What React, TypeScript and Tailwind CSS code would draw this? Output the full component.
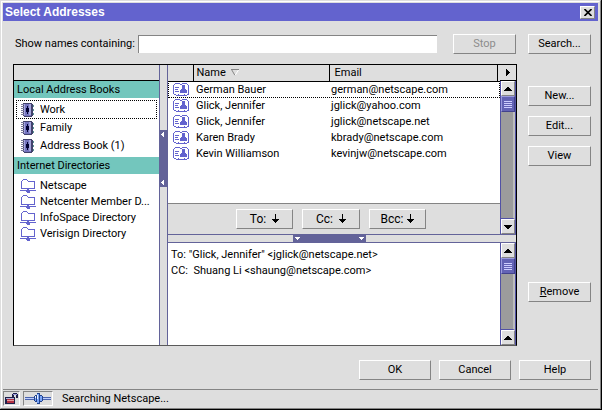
import type { ReactNode } from "react";

const contacts = [
  { name: "German Bauer", email: "german@netscape.com" },
  { name: "Glick, Jennifer", email: "jglick@yahoo.com" },
  { name: "Glick, Jennifer", email: "jglick@netscape.net" },
  { name: "Karen Brady", email: "kbrady@netscape.com" },
  { name: "Kevin Williamson", email: "kevinjw@netscape.com" },
];

const directories = ["Netscape", "Netcenter Member D...", "InfoSpace Directory", "Verisign Directory"];

function Button({ children, className = "", disabled = false }: { children: ReactNode; className?: string; disabled?: boolean }) {
  return (
    <button
      type="button"
      disabled={disabled}
      className={`flex h-5 shrink-0 items-center justify-center border border-t-white border-l-white border-r-[#848484] border-b-[#848484] bg-[#dedede] disabled:text-[#8c8c8c] ${className}`}
    >
      {children}
    </button>
  );
}

function CardIcon() {
  return (
    <svg width="16" height="13" viewBox="0 0 16 13" shapeRendering="crispEdges" className="block shrink-0">
      <path d="M2 0h5v1h-5zM1 1h1v1h-1zM0 2h1v9h-1zM1 11h2v1h-2zM3 12h2v-1h1v1h5v-1h1v1h2v1h-11zM7 1h2v1h-2zM9 0h5v1h-5zM14 1h1v1h-1zM15 2h1v10h-1zM14 11h1v1h-1z" fill="#6363ce" />
      <path d="M2 4h4v1h-4zM2 6h3v1h-3zM2 8h4v1h-4zM9 2h3v4h-3zM8 6h5v1h-5zM7 7h7v3h-7z" fill="#6363ce" />
    </svg>
  );
}

function BookIcon() {
  return (
    <svg width="13" height="14" viewBox="0 0 13 14" shapeRendering="crispEdges" className="block shrink-0">
      <path d="M2 0h9v1h1v12h-1v1h-8v-1h-1z" fill="#42426b" />
      <path d="M3 1h7v12h-7z" fill="#7373bd" />
      <path d="M3 1h1v11h-1zM8 1h2v11h-2z" fill="#a5a5de" />
      <path d="M5 5h3v4h-3zM6 3h1v8h-1z" fill="#000031" />
      <path d="M0 1h3v1h-3zM0 3h3v1h-3zM0 5h3v1h-3zM0 7h3v1h-3zM0 9h3v1h-3zM0 11h3v1h-3z" fill="#7b7b9c" />
      <path d="M12 2h1v2h-1zM12 6h1v2h-1zM12 10h1v2h-1z" fill="#5a9494" />
    </svg>
  );
}

function DirectoryIcon() {
  return (
    <svg width="16" height="15" viewBox="0 0 16 15" shapeRendering="crispEdges" className="block shrink-0">
      <path
        d="M3 0h4v1h-4zM2 1h1v1h-1zM1 2h1v7h-1zM7 1h1v1h-1zM8 2h6v1h-6zM14 2h1v7h-1zM1 9h14v1h-14zM0 11h6v1h-6zM10 11h6v1h-6zM7 10h2v1h-2zM6 11h4v2h-4zM7 13h3v1h-3z"
        fill="#6363ce"
      />
    </svg>
  );
}

function ArrowDown() {
  return (
    <svg width="7" height="10" viewBox="0 0 7 10" shapeRendering="crispEdges" className="block">
      <path d="M3 0h1v5h3v1h-1v1h-1v1h-1v1h-1v-1h-1v-1h-1v-1h-1v-1h3z" />
    </svg>
  );
}

function Triangle({ dir }: { dir: "up" | "down" }) {
  return (
    <svg width="8" height="4" viewBox="0 0 8 4" shapeRendering="crispEdges" className="block">
      <path d={dir === "up" ? "M3 0h2v1h1v1h1v1h1v1h-8v-1h1v-1h1v-1h1z" : "M0 0h8v1h-1v1h-1v1h-1v1h-2v-1h-1v-1h-1v-1h-1z"} />
    </svg>
  );
}

function ScrollButton({ dir, label }: { dir: "up" | "down"; label: string }) {
  return (
    <button
      type="button"
      aria-label={label}
      className="flex h-[15px] shrink-0 items-center justify-center border border-t-white border-l-white border-r-[#848484] border-b-[#848484] bg-[#dedede]"
    >
      <Triangle dir={dir} />
    </button>
  );
}

function Scrollbar({ end }: { end: "up" | "down" }) {
  return (
    <div className="flex min-h-0 w-4 flex-1 flex-col border-x border-[#5252a5] bg-[#9c9c9c]">
      <ScrollButton dir="up" label="Scroll up" />
      <div className="flex h-4 shrink-0 flex-col items-center justify-center gap-px border border-[#42428c] border-t-[#9c9cde] border-l-[#9c9cde] bg-[#6363b5]">
        <i className="block h-px w-2 bg-[#ceceff]" />
        <i className="block h-px w-2 bg-[#ceceff]" />
        <i className="block h-px w-2 bg-[#ceceff]" />
        <i className="block h-px w-2 bg-[#ceceff]" />
      </div>
      <div className="flex-1 border-r-2 border-b border-r-[#bdbdbd] border-b-[#5252a5]" />
      <ScrollButton dir={end} label="Scroll down" />
    </div>
  );
}

function GripLeft() {
  return (
    <svg width="3" height="5" viewBox="0 0 3 5" shapeRendering="crispEdges" className="block">
      <path d="M2 0h1v5h-1v-1h-1v-1h-1v-1h1v-1h1z" fill="#fff" />
    </svg>
  );
}

function GripDown() {
  return (
    <svg width="5" height="3" viewBox="0 0 5 3" shapeRendering="crispEdges" className="block">
      <path d="M0 0h5v1h-1v1h-1v1h-1v-1h-1v-1h-1z" fill="#fff" />
    </svg>
  );
}

function Sidebar() {
  return (
    <nav className="flex w-[145px] shrink-0 flex-col bg-white">
      <div className="h-4 border-b border-black bg-[#dedede]" />
      <h2 className="h-[17px] bg-[#73c6bd] pl-[3px] leading-[17px]">Local Address Books</h2>
      <ul className="px-0.5 pt-0.5">
        <li className="flex h-[19px] items-center gap-1.5 border border-dotted border-black pl-1">
          <BookIcon />
          Work
        </li>
        <li className="flex h-[17px] items-center gap-1.5 pl-[5px]">
          <BookIcon />
          Family
        </li>
        <li className="flex h-5 items-center gap-1.5 pl-[5px]">
          <BookIcon />
          Address Book (1)
        </li>
      </ul>
      <h2 className="mt-px h-[17px] bg-[#73c6bd] pl-[3px] leading-[17px]">Internet Directories</h2>
      <ul className="pt-1 pl-1.5">
        {directories.map((d) => (
          <li key={d} className="flex h-4 items-center gap-1 whitespace-nowrap">
            <DirectoryIcon />
            {d}
          </li>
        ))}
      </ul>
    </nav>
  );
}

function ContactTable() {
  return (
    <table className="w-full table-fixed border-collapse text-left">
      <colgroup>
        <col className="w-[25px]" />
        <col className="w-[136px]" />
        <col />
        <col className="w-[3px]" />
      </colgroup>
      <thead>
        <tr className="h-4 bg-[#dedede]">
          <th className="border-r border-b border-black p-0" />
          <th className="border-r border-b border-black p-0 pl-[3px] font-normal">
            <span className="flex h-[15px] items-center gap-[5px]">
              Name
              <svg width="8" height="7" viewBox="0 0 8 7" className="block">
                <path d="M0 .5h8M.5 .5l3.500 6" stroke="#848484" fill="none" />
                <path d="M7.500 1l-3.500 5.500" stroke="#fff" fill="none" />
              </svg>
            </span>
          </th>
          <th className="border-r border-b border-black p-0 pl-[5px] leading-[15px] font-normal">Email</th>
          <th className="border-b border-black p-0" />
        </tr>
      </thead>
      <tbody>
        {contacts.map((c, i) => (
          <tr key={i} className={i === 0 ? "h-4 outline-1 -outline-offset-1 outline-dotted outline-black" : "h-4"}>
            <td className="p-0 pl-[5px]">
              <CardIcon />
            </td>
            <td className="p-0 pl-[3px] leading-4">{c.name}</td>
            <td colSpan={2} className="p-0 pl-0.5 leading-4">
              {c.email}
            </td>
          </tr>
        ))}
      </tbody>
    </table>
  );
}

export default function App() {
  return (
    <div className="bg-white pr-1 pb-1 font-[Roboto,'Liberation_Sans',sans-serif] text-[11px] leading-4 text-black">
      <main className="border-r border-b border-black bg-[#dedede]">
        <div className="border border-t-[#dedede] border-l-[#dedede] border-r-[#848484] border-b-[#848484]">
          <div className="border border-t-white border-l-white border-r-[#dedede] border-b-[#dedede] p-px">
            <header className="flex h-[18px] items-center justify-between bg-[#6363ce] pr-[3px] pl-0.5">
              <h1 className="font-['Liberation_Sans',sans-serif] text-[12px] font-bold text-white">Select Addresses</h1>
              <button
                type="button"
                aria-label="Close"
                className="flex h-[13px] w-[15px] items-center justify-center border border-t-white border-l-white border-r-[#848484] border-b-[#848484] bg-[#dedede]"
              >
                <svg width="8" height="7" viewBox="0 0 8 7" className="block">
                  <path d="M.5 0l7 7M7.500 0l-7 7" stroke="#000" strokeWidth="1.600" />
                </svg>
              </button>
            </header>

            <div className="flex items-center pt-[13px] pr-[7px] pl-3">
              <label htmlFor="filter" className="w-[123px] shrink-0 whitespace-nowrap">
                Show names containing:
              </label>
              <input
                id="filter"
                type="text"
                className="h-[18px] min-w-0 flex-1 border-t border-l border-[#848484] bg-white px-1 outline-none"
              />
              <Button className="ml-4 w-[63px]" disabled>
                Stop
              </Button>
              <Button className="ml-3 w-[63px]">Search...</Button>
            </div>

            <div className="flex pt-2.5 pr-[7px] pl-2.5">
              <section className="flex min-w-0 flex-1 border border-black border-b-[#5a5a5a]">
                <Sidebar />
                <div className="flex w-[9px] shrink-0 flex-col border-x border-[#636399] pt-[65px]">
                  <div className="flex h-[57px] flex-col justify-between bg-[#636399] py-0.5 pl-px">
                    <GripLeft />
                    <GripLeft />
                  </div>
                </div>
                <div className="flex min-w-0 flex-1 flex-col">
                  <div className="flex h-[169px]">
                    <div className="flex min-w-0 flex-1 flex-col bg-white">
                      <ContactTable />
                      <div className="mt-auto flex h-[31px] items-center justify-center gap-[9px] border-t border-[#848484] bg-[#dedede] pr-1.5 text-[12px]">
                        <Button className="w-[57px] gap-1.5">
                          To: <ArrowDown />
                        </Button>
                        <Button className="w-[58px] gap-1.5">
                          Cc: <ArrowDown />
                        </Button>
                        <Button className="w-[57px] gap-1">
                          Bcc: <ArrowDown />
                        </Button>
                      </div>
                    </div>
                    <div className="flex w-4 flex-col">
                      <button
                        type="button"
                        aria-label="Choose columns"
                        className="flex h-4 items-center justify-center border-b border-black bg-[#dedede]"
                      >
                        <svg width="4" height="7" viewBox="0 0 4 7" shapeRendering="crispEdges" className="block">
                          <path d="M0 0h1v1h1v1h1v1h1v1h-1v1h-1v1h-1v1h-1z" />
                        </svg>
                      </button>
                      <Scrollbar end="down" />
                    </div>
                  </div>
                  <div className="flex h-[9px] justify-center border-y border-[#636399] pr-[25px]">
                    <div className="flex w-[73px] items-center justify-between bg-[#636399] px-0.5">
                      <GripDown />
                      <GripDown />
                    </div>
                  </div>
                  <div className="flex h-[102px] bg-white">
                    <div className="min-w-0 flex-1 pt-1 pl-[3px] leading-4">
                      <p>To: "Glick, Jennifer" &lt;jglick@netscape.net&gt;</p>
                      <p>CC:&nbsp; Shuang Li &lt;shaung@netscape.com&gt;</p>
                    </div>
                    <div className="flex w-4">
                      <Scrollbar end="up" />
                    </div>
                  </div>
                </div>
              </section>
              <aside className="ml-[11px] flex w-[63px] flex-col gap-2.5 pt-[22px]">
                <Button>New...</Button>
                <Button>Edit...</Button>
                <Button>View</Button>
                <Button className="mt-auto mb-11">
                  <span>
                    <u>R</u>emove
                  </span>
                </Button>
              </aside>
            </div>

            <div className="flex justify-end gap-2 pt-3.5 pr-[7px] pb-[9px]">
              <Button className="w-[72px]">OK</Button>
              <Button className="w-[72px]">Cancel</Button>
              <Button className="w-[72px]">Help</Button>
            </div>

            <footer className="flex h-[17px] items-end border-t border-[#848484]">
              <span className="mr-[3px] flex h-[15px] w-[17px] items-center justify-center border border-t-[#848484] border-l-[#848484] border-r-white border-b-white">
                <svg width="15" height="13" viewBox="0 0 15 13" shapeRendering="crispEdges" className="block">
                  <path d="M1 5h10v7h-10zM8 2h1v3h-1zM9 1h4v1h-4zM13 2h1v4h-2v-3h-2v2h-1v-3h4z" fill="#21214a" />
                  <path d="M2 6h8v1h-8z" fill="#b5b5de" />
                  <path d="M3 7h7v4h-7z" fill="#b53142" />
                  <path d="M3 8h7v1h-7z" fill="#e79c9c" />
                  <path d="M9 2h4v1h-4z" fill="#9c9cde" />
                </svg>
              </span>
              <span className="flex h-[15px] w-[30px] items-center justify-center border border-t-[#848484] border-l-[#848484] border-r-white border-b-white">
                <svg width="26" height="11" viewBox="0 0 26 11" shapeRendering="crispEdges" className="block">
                  <path d="M0 4h9v3h-9zM17 4h9v3h-9z" fill="#4a63ad" />
                  <path d="M0 5h9v1h-9zM17 5h9v1h-9z" fill="#bdceff" />
                  <path d="M9 3h1v-1h2v-2h3v2h2v1h1v5h-1v1h-2v2h-3v-2h-2v-1h-1z" fill="#21428c" />
                  <path d="M10 3h1v5h-1zM12 1h2v9h-2zM15 3h2v5h-2z" fill="#7ba5f7" />
                  <path d="M12 2h1v4h-1zM10 3h1v2h-1z" fill="#e7efff" />
                </svg>
              </span>
              <span className="ml-[9px] leading-[15px]">Searching Netscape...</span>
            </footer>
          </div>
        </div>
      </main>
    </div>
  );
}
